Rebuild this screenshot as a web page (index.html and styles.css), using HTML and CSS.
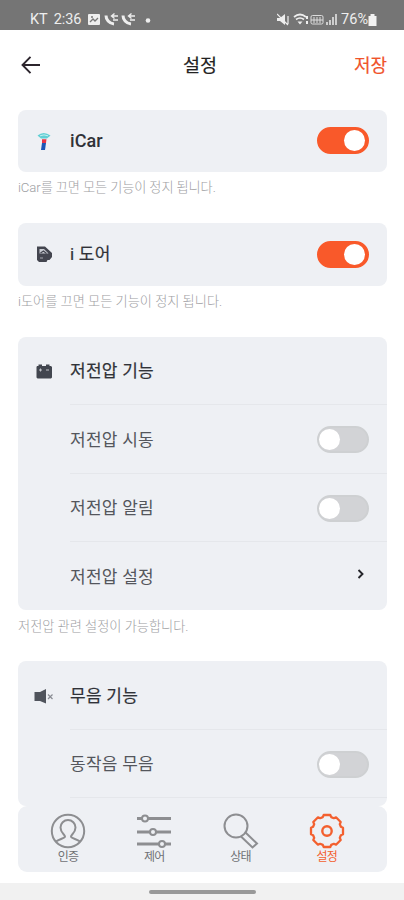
FILE: index.html
```html
<!DOCTYPE html>
<html lang="ko">
<head>
<meta charset="utf-8">
<meta name="viewport" content="width=device-width">
<title>설정</title>
<link rel="stylesheet" href="styles.css">
</head>
<body>
<div class="screen">
  <div class="status">
    <span class="carrier">KT</span><span class="clock">2:36</span>
    <svg class="notif" width="64" height="16" viewBox="0 0 64 16">
      <rect x="0" y="2" width="12" height="11" rx="1" fill="#eee"/>
      <path d="M2 10l3-3 2 2 3-3M3 5h2" stroke="#777" stroke-width="1.3" fill="none"/>
      <g id="call" fill="none" stroke="#eee"><path d="M18 3.500c0 4 3 8 8 8.500" stroke-width="3"/><path d="M30 4h-6M26.500 1.500L23.500 4l3 2.500M30 8h-5" stroke-width="1.400"/></g>
      <use href="#call" x="17"/>
      <circle cx="60" cy="8.500" r="2.300" fill="#eee"/>
    </svg>
    <svg class="signals" width="62" height="16" viewBox="0 0 62 16">
      <path d="M0 6h3l5-4v11l-5-4H0z" fill="#eee"/><path d="M0 2l11 11M11 4v8" stroke="#eee" stroke-width="1.200"/>
      <path d="M17 5q6-5 12 0M19 7.500q4-3 8 0" fill="none" stroke="#eee" stroke-width="1.700"/><path d="M20.500 9.500h5L23 12.500z" fill="#eee"/><path d="M30 4v3M30 9v3" stroke="#eee" stroke-width="2"/>
      <rect x="34" y="3.500" width="12" height="8.500" rx="1.500" fill="none" stroke="#ddd"/><path d="M37 5v6M40 5v6M43 5v6M34 8h12" stroke="#ddd"/>
      <path d="M50 13v-3M53 13V8M56 13V5M59 13V2" stroke="#ddd" stroke-width="1.700"/>
    </svg>
    <span class="percent">76%</span>
    <svg class="battery" width="9" height="14" viewBox="0 0 9 14"><path d="M2.500 1h4v2H8.500v10H.5V3h2z" fill="#f2f2f2"/></svg>
  </div>
  <header class="header">
    <svg class="back" width="20" height="20" viewBox="0 0 20 20"><path d="M19 10H2M9.500 1.800L1.500 10l8 8.200" fill="none" stroke="#2c252d" stroke-width="1.900"/></svg>
    <h1>설정</h1>
    <span class="save">저장</span>
  </header>
  <main>
    <section class="card">
      <div class="row head">
        <svg class="icon" width="20" height="20" viewBox="0 0 20 20"><path d="M3.500 4.500q6-5 13 0l-3.500 3H7z" fill="#61cfd4"/><path d="M6 4.800q4-1.800 8 0" stroke="#c4eef0" fill="none"/><path d="M8 8.200h4.500L12 12H8z" fill="#e93545"/><path d="M8 12h4l-1 7H7z" fill="#1c55b5"/></svg>
        <span class="label latin">iCar</span><span class="switch on"></span>
      </div>
    </section>
    <p class="note n1">iCar를 끄면 모든 기능이 정지 됩니다.</p>
    <section class="card">
      <div class="row head">
        <svg class="icon" width="20" height="20" viewBox="0 0 20 20"><path d="M3 2.500h8l7 6.500v4L15.500 16h-2l-1 2H5l-2-2z" fill="#43454f"/><path d="M5.500 5v4.500h9L10 5z" fill="#c9ccd3"/><path d="M6.500 9l3-2 3 2.500" stroke="#43454f" stroke-width="1.200" fill="none"/><path d="M6 14h3" stroke="#a6a8b0"/></svg>
        <span class="label">i 도어</span><span class="switch on"></span>
      </div>
    </section>
    <p class="note n2">i도어를 끄면 모든 기능이 정지 됩니다.</p>
    <section class="card">
      <div class="row head power"><svg class="icon" width="20" height="20" viewBox="0 0 20 20"><path d="M3 5h1.500V3.500H8V5h4V3.500h3.500V5H17l1 1v10.500l-1 1H3.500l-1-1V6z" fill="#42464f"/><path d="M5 9h3M6.500 7.500v3M12 9h3" stroke="#c0c2c8"/></svg><span class="label">저전압 기능</span></div>
      <div class="row"><span class="label">저전압 시동</span><span class="switch"></span></div>
      <div class="row"><span class="label">저전압 알림</span><span class="switch"></span></div>
      <div class="row"><span class="label">저전압 설정</span><svg class="chevron" width="8" height="10" viewBox="0 0 8 10"><path d="M1.500 1l4 4-4 4" fill="none" stroke="#25262b" stroke-width="1.900"/></svg></div>
    </section>
    <p class="note n3">저전압 관련 설정이 가능합니다.</p>
    <section class="card">
      <div class="row head mute"><svg class="icon" width="20" height="20" viewBox="0 0 20 20"><path d="M.5 6H6l6-3v14.500L6 15H.5z" fill="#50545c"/><path d="M14 8.500l4.500 4.500M18.500 8.500L14 13" stroke="#888b92" stroke-width="1.200"/></svg><span class="label">무음 기능</span></div>
      <div class="row"><span class="label">동작음 무음</span><span class="switch"></span></div>
      <div class="stub"></div>
    </section>
  </main>
  <nav class="tabs">
    <div class="tab"><svg width="36" height="36" viewBox="0 0 36 36"><circle cx="18" cy="18" r="16.200"/><path d="M6 28.500c3-2.500 9-3 9-5 0-2-4.500-3.500-4.500-9a7.500 7.500 0 0 1 15 0c0 5.500-4.500 7-4.500 9 0 2 6 2.500 9 5"/></svg><span>인증</span></div>
    <div class="tab"><svg width="36" height="36" viewBox="0 0 36 36"><g stroke-width="3.200"><path d="M1 5.500h5M12 5.500h23M1 19h13M20 19h15M1 31h22M29 31h6"/></g><circle cx="9" cy="5.500" r="3"/><circle cx="17" cy="19" r="3"/><circle cx="26" cy="31" r="3"/></svg><span>제어</span></div>
    <div class="tab"><svg width="36" height="36" viewBox="0 0 36 36"><circle cx="13" cy="13" r="11.500"/><path d="M18 23.500L29.500 34.500l4.500-4L22.500 19.500"/></svg><span>상태</span></div>
    <div class="tab active"><svg width="36" height="36" viewBox="0 0 36 36"><path stroke-width="2.300" stroke-linejoin="round" d="M14.700 2h6.600l.9 2.100 2.700 1.100 2.100-.9 4.700 4.700-.9 2.100 1.100 2.700 2.100.9v6.600l-2.100.9-1.100 2.700.9 2.100-4.700 4.700-2.100-.9-2.700 1.100-.9 2.100h-6.600l-.9-2.100-2.700-1.100-2.100.9-4.700-4.700.9-2.100-1.100-2.700-2.100-.9v-6.600l2.100-.9 1.100-2.700-.9-2.100 4.700-4.700 2.100.9 2.700-1.100z"/><circle cx="18" cy="18" r="4.700" stroke-width="2.400"/></svg><span>설정</span></div>
  </nav>
  <footer class="gesture"><span></span></footer>
</div>
</body>
</html>
```
FILE: styles.css
```css
* { box-sizing: border-box; }
body { margin: 0; background: #fff; font-family: Roboto, "Noto Sans CJK KR", sans-serif; }
.screen { width: 404px; height: 900px; display: flex; flex-direction: column; overflow: hidden; }
.status { height: 30px; flex: none; display: flex; align-items: center; padding: 10px 27px 0 30px; background: #757575; color: #eee; font-size: 14.5px; line-height: 20px; }
.clock { margin-left: 6px; width: 27px; letter-spacing: -.1px; }
.notif { margin-left: 7px; }
.signals { margin-left: auto; }
.percent { margin-left: 2px; letter-spacing: 0; }
.battery { margin-left: 0; }
.header { height: 79.500px; flex: none; display: grid; grid-template-columns: 1fr auto 1fr; align-items: center; padding: 0 17px 10px 21px; color: #222; }
.header h1 { margin: 2px 0 0; font-size: 18.500px; font-weight: 400; line-height: 26px; transform: translateX(-4px); -webkit-text-stroke: .2px #222; }
.save { justify-self: end; margin-top: 2px; font-size: 18px; font-weight: 400; color: #f0532b; line-height: 26px; -webkit-text-stroke: .2px #f0532b; }
main { flex: 1; min-height: 0; padding: 0 17px 0 18px; overflow: hidden; }
.card { background: #eef0f4; border-radius: 8px; overflow: hidden; }
.row { height: 68.500px; margin-left: 52px; padding-top: 2px; padding-right: 18px; display: flex; align-items: center; justify-content: space-between; border-top: 1px solid #e5e7eb; }
.row.head { margin-left: 0; padding-top: 0; padding-left: 16px; border-top: 0; justify-content: flex-start; height: 67px; }
.row.head.power { height: 67.500px; padding-top: 2px; }
.row.head:only-child { height: 62.500px; }
.row.head.mute { height: 67.500px; padding-top: 3px; }
.icon { flex: none; margin-right: 18px; }
.label { font-size: 17px; line-height: 26px; letter-spacing: .25px; color: #54565c; white-space: nowrap; }
.head .label { color: #303238; margin-left: -2px; -webkit-text-stroke: .2px #303238; }
.head .latin { font-size: 18px; letter-spacing: .1px; font-weight: 500; -webkit-text-stroke: 0; }
.head .switch { margin-left: auto; }
.switch { width: 52px; height: 27px; border-radius: 14px; background: #d2d3d6; border: 2.500px solid #ced0d2; display: flex; align-items: center; flex: none; }
.switch::before { content: ""; width: 21px; height: 21px; border-radius: 50%; background: #fff; }
.switch.on { background: #f9592a; border-color: #f9592a; justify-content: flex-end; padding-right: 2px; }
.chevron { margin-right: 4px; margin-bottom: 5px; }
.note { margin: 0; padding-top: 6px; height: 51px; font-size: 13.200px; line-height: 20px; color: #a0a0a3; white-space: nowrap; font-weight: 300; }
.n1 { letter-spacing: -.1px; }
.n3 { padding-top: 7px; height: 51.500px; }
.stub { height: 9px; margin-left: 52px; border-top: 1px solid #e5e7eb; }
.tabs { height: 66px; flex: none; margin: 0 17px 0 18px; padding: 7px 17px 0 7px; display: grid; grid-template-columns: repeat(4, 1fr); background: #eef0f4; border-radius: 9px; }
.tab { display: flex; flex-direction: column; align-items: center; font-size: 12px; letter-spacing: -.7px; line-height: 17px; color: #707175; }
.tab svg { flex: none; fill: none; stroke: #8d8e91; stroke-width: 2; }
.tab.active { color: #f3602f; }
.tab.active svg { stroke: #f3602f; }
.gesture { height: 17px; margin-top: 11px; flex: none; background: #f1f1f1; display: flex; justify-content: center; align-items: flex-start; padding-top: 7px; }
.gesture span { width: 107px; height: 4px; border-radius: 2px; background: #999; }
```
